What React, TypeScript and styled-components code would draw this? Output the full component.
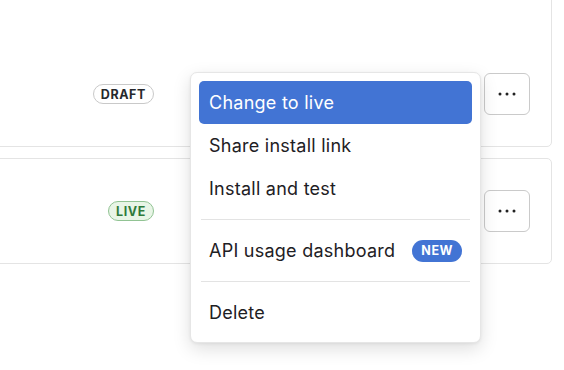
import styled, { createGlobalStyle } from "styled-components";

const GlobalStyle = createGlobalStyle`
  html, body {
    margin: 0;
    padding: 0;
    background: #ffffff;
  }
  html {
    overflow: hidden;
  }
  body {
    min-height: 370px;
    font-family: Inter, "Noto Sans", "Liberation Sans", sans-serif;
    color: #1e2024;
  }
`;

const List = styled.div`
  display: flex;
  flex-direction: column;
  gap: 11px;
  width: 572px;
  margin-top: -79px;
  margin-left: -20px;
`;

const Card = styled.div<{ $top?: number }>`
  box-sizing: border-box;
  border: 1px solid #e4e4e4;
  border-radius: 5px;
  background: #fff;
  padding-top: ${(p) => p.$top ?? 0}px;
`;

const Row = styled.div`
  display: grid;
  grid-template-columns: 1fr 330px auto;
  align-items: center;
  height: 104px;
  padding-right: 21px;
`;

const Badge = styled.span<{ $tone: "draft" | "live" }>`
  justify-self: end;
  box-sizing: border-box;
  height: 20px;
  padding: 0 7px;
  border-radius: 10px;
  display: inline-flex;
  align-items: center;
  font-size: 12.5px;
  font-weight: 700;
  letter-spacing: 0.6px;
  border: 1px solid ${(p) => (p.$tone === "live" ? "#91c393" : "#c9c9c9")};
  background: ${(p) => (p.$tone === "live" ? "#e8f5e6" : "#ffffff")};
  color: ${(p) => (p.$tone === "live" ? "#2f7a3a" : "#26282c")};
`;

const Anchor = styled.div`
  position: relative;
`;

const MoreButton = styled.button`
  box-sizing: border-box;
  width: 46px;
  height: 42px;
  border: 1px solid #cacaca;
  border-radius: 6px;
  background: #fff;
  display: flex;
  align-items: center;
  justify-content: center;
  padding: 0;
  cursor: pointer;
`;

const Menu = styled.div`
  position: absolute;
  right: calc(100% + 3px);
  top: -1px;
  box-sizing: border-box;
  width: 291px;
  padding: 8px;
  border: 1px solid #e6e6e6;
  border-radius: 7px;
  background: #fff;
  box-shadow: 0 6px 18px rgba(0, 0, 0, 0.13), 0 1px 3px rgba(0, 0, 0, 0.06);
  z-index: 10;
`;

const Item = styled.div<{ $active?: boolean }>`
  display: flex;
  align-items: center;
  gap: 17px;
  height: 43px;
  padding: 0 10px;
  border-radius: 5px;
  font-size: 18px;
  letter-spacing: 0.25px;
  white-space: nowrap;
  background: ${(p) => (p.$active ? "#4274d4" : "transparent")};
  color: ${(p) => (p.$active ? "#ffffff" : "#1e2024")};
`;

const Separator = styled.div`
  height: 1px;
  margin: 9px 2px;
  background: #e3e3e3;
`;

const NewTag = styled.span`
  display: inline-flex;
  align-items: center;
  height: 22px;
  padding: 0 9px;
  border-radius: 11px;
  background: #4274d4;
  color: #fff;
  font-size: 12.5px;
  font-weight: 700;
  letter-spacing: 0.6px;
`;

function Dots() {
  return (
    <svg width="18" height="4" viewBox="0 0 18 4">
      <circle cx="2" cy="2" r="1.5" fill="#222" />
      <circle cx="9" cy="2" r="1.5" fill="#222" />
      <circle cx="16" cy="2" r="1.5" fill="#222" />
    </svg>
  );
}

export default function App() {
  return (
    <>
      <GlobalStyle />
      <List>
        <Card $top={120}>
          <Row>
            <Badge $tone="draft">DRAFT</Badge>
            <span />
            <Anchor>
              <MoreButton>
                <Dots />
              </MoreButton>
              <Menu>
                <Item $active>Change to live</Item>
                <Item>Share install link</Item>
                <Item>Install and test</Item>
                <Separator />
                <Item>
                  API usage dashboard
                  <NewTag>NEW</NewTag>
                </Item>
                <Separator />
                <Item>Delete</Item>
              </Menu>
            </Anchor>
          </Row>
        </Card>
        <Card>
          <Row>
            <Badge $tone="live">LIVE</Badge>
            <span />
            <MoreButton>
              <Dots />
            </MoreButton>
          </Row>
        </Card>
      </List>
    </>
  );
}
